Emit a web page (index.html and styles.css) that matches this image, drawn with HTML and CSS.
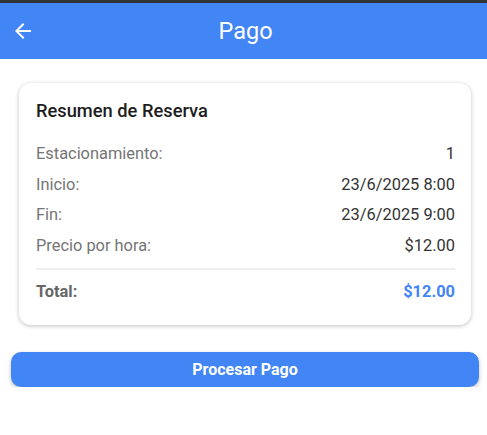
FILE: index.html
```html
<!DOCTYPE html>
<html lang="es">
<head>
<meta charset="utf-8">
<link rel="stylesheet" href="styles.css">
</head>
<body>
<div class="statusbar"></div>
<header class="appbar">
  <svg class="back" width="24" height="24" viewBox="0 0 24 24"><path d="M20 11H7.83l5.59-5.59L12 4l-8 8 8 8 1.41-1.41L7.83 13H20v-2z" fill="#fff"/></svg>
  <h1 class="title">Pago</h1>
</header>
<main class="content">
  <section class="card">
    <h2 class="card-title">Resumen de Reserva</h2>
    <div class="row"><span class="label">Estacionamiento:</span><span class="value">1</span></div>
    <div class="row"><span class="label">Inicio:</span><span class="value">23/6/2025 8:00</span></div>
    <div class="row"><span class="label">Fin:</span><span class="value">23/6/2025 9:00</span></div>
    <div class="row"><span class="label">Precio por hora:</span><span class="value">$12.00</span></div>
    <hr class="divider">
    <div class="row total"><span class="label">Total:</span><span class="value">$12.00</span></div>
  </section>
  <button class="pay">Procesar Pago</button>
</main>
</body>
</html>
```
FILE: styles.css
```css
* { box-sizing: border-box; }
body {
  margin: 0;
  background: #fff;
  font-family: Roboto, "Noto Sans", sans-serif;
}
.statusbar { height: 3px; background: #333; }
.appbar {
  height: 56px;
  background: #4285f4;
  display: flex;
  align-items: center;
  justify-content: center;
  position: relative;
}
.back { position: absolute; left: 11px; top: 16px; }
.title {
  margin: 0 0 0 4px;
  color: #fff;
  font-size: 23.5px;
  font-weight: 400;
}
.content { padding: 24px 8px 0 11px; }
.card {
  margin: 0 8px;
  background: #fff;
  border-radius: 12px;
  box-shadow: 0 1px 4px rgba(0,0,0,0.25);
  padding: 16px 16px 17px 17px;
}
.card-title {
  margin: 0 0 16px 0;
  font-size: 18.3px;
  font-weight: 500;
  line-height: 24px;
  color: #1d1d1d;
}
.row {
  display: flex;
  justify-content: space-between;
  font-size: 16.4px;
  line-height: 22px;
  padding: 4px 0 4.5px;
}
.label { color: #757575; }
.value { color: #333; }
.divider {
  border: none;
  border-top: 2px solid #eee;
  margin: 7px 0 7px;
}
.total { font-weight: 700; }
.total .label { color: #666; }
.total .value { color: #4285f4; }
.pay {
  display: block;
  width: 100%;
  margin-top: 27px;
  height: 35px;
  border: none;
  border-radius: 10px;
  background: #4285f4;
  color: #fff;
  font-family: Roboto, sans-serif;
  font-size: 16px;
  font-weight: 700;
  box-shadow: 0 2px 4px rgba(0,0,0,0.25);
}
```
